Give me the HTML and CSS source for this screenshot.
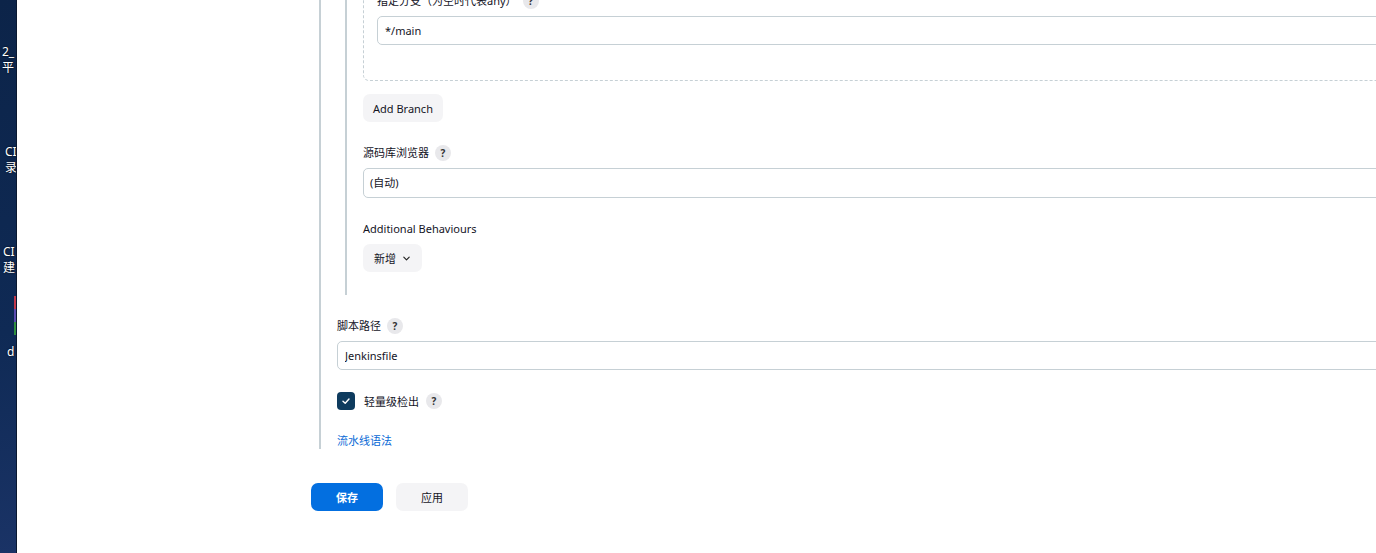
FILE: index.html
```html
<!DOCTYPE html>
<html lang="zh-CN">
<head>
  <meta charset="UTF-8" />
  <meta name="viewport" content="width=device-width, initial-scale=1.0" />
  <title>Pipeline 配置</title>
  <link rel="stylesheet" href="styles.css">
</head>
<body>
  <div class="desktop">
    <div class="desk-label l1">2_<br>平</div>
    <div class="desk-label l2">CI<br>录</div>
    <div class="desk-label l3">CI<br>建</div>
    <div class="desk-icon">
      <span class="bar red"></span>
      <span class="bar purple"></span>
      <span class="bar green"></span>
    </div>
    <div class="desk-label l4">d</div>
  </div>

  <div class="page">
    <div class="form">
      <div class="section outer">
        <div class="section inner">
          <div class="branch-box">
            <div class="label">指定分支（为空时代表any） <span class="help">?</span></div>
            <input class="field" type="text" value="*/main" />
          </div>

          <button class="btn small add-branch">Add Branch</button>

          <div class="label gap">源码库浏览器 <span class="help">?</span></div>
          <div class="field select">(自动)</div>

          <div class="label gap">Additional Behaviours</div>
          <button class="btn small add-new">新增
            <svg width="9" height="9" viewBox="0 0 10 10"><path d="M2 3.5 L5 6.5 L8 3.5" fill="none" stroke="#222" stroke-width="1.3" stroke-linecap="round" stroke-linejoin="round"/></svg>
          </button>
        </div>

        <div class="label gap">脚本路径 <span class="help">?</span></div>
        <input class="field" type="text" value="Jenkinsfile" />

        <div class="check-row">
          <span class="checkbox">
            <svg width="10" height="10" viewBox="0 0 10 10"><path d="M2 5.2 L4.2 7.3 L8 3" fill="none" stroke="#fff" stroke-width="1.4" stroke-linecap="round" stroke-linejoin="round"/></svg>
          </span>
          <span class="check-label">轻量级检出</span>
          <span class="help">?</span>
        </div>

        <a class="link" href="#">流水线语法</a>
      </div>

      <div class="actions">
        <button class="btn primary">保存</button>
        <button class="btn secondary">应用</button>
      </div>
    </div>
  </div>
</body>
</html>
```

FILE: styles.css
```css
* {
  box-sizing: border-box;
}

html, body {
  height: 100%;
}

body {
  margin: 0;
  display: flex;
  overflow: hidden;
  background: #ffffff;
  color: #14141f;
  font-family: "Noto Sans", "Noto Sans CJK SC", sans-serif;
  font-size: 11px;
}

/* desktop strip on the left */
.desktop {
  position: relative;
  width: 17px;
  flex-shrink: 0;
  background: linear-gradient(170deg, #0c2449 0%, #0f2a55 60%, #1a3366 100%);
  border-right: 1px solid #0a1830;
  overflow: hidden;
}
.desk-label {
  position: absolute;
  color: #ffffff;
  font-size: 12px;
  line-height: 16px;
  text-shadow: 0 0 2px #000;
  white-space: nowrap;
}
.l1 { top: 44px; left: 2px; }
.l2 { top: 144px; left: 5px; }
.l3 { top: 244px; left: 3px; }
.l4 { top: 344px; left: 7px; }
.desk-icon {
  position: absolute;
  top: 296px;
  left: 14px;
  display: flex;
  flex-direction: column;
}
.bar {
  width: 4px;
  height: 13px;
}
.red { background: #c0384c; }
.purple { background: #5a4bb0; }
.green { background: #2f8f3f; }

/* form area */
.page {
  flex: 1;
  padding-left: 294px;
}
.form {
  width: 1120px;
}
.section {
  border-left: 2px solid #c6d0d5;
  padding-left: 16px;
}
.outer {
  margin-left: 8px;
}
.inner {
  margin-left: 8px;
  padding-bottom: 23px;
}

.branch-box {
  margin-top: -7px;
  border-left: 1px dashed #c6d0d5;
  border-bottom: 1px dashed #c6d0d5;
  border-bottom-left-radius: 6px;
  padding: 0 0 35px 13px;
}

.label {
  display: flex;
  align-items: center;
  gap: 6px;
  height: 16px;
  line-height: 16px;
  margin-bottom: 7px;
}
.label.gap {
  margin-top: 23px;
}

.help {
  display: inline-flex;
  align-items: center;
  justify-content: center;
  width: 16px;
  height: 16px;
  border-radius: 50%;
  background: #e8e8eb;
  color: #333;
  font-size: 10px;
  font-weight: 700;
  line-height: 1;
}

.field {
  display: block;
  width: 100%;
  height: 29px;
  padding: 0 7px;
  border: 1px solid #c6d0d5;
  border-radius: 5px;
  background: #fff;
  color: #14141f;
  font-family: inherit;
  font-size: 11px;
  outline: none;
}
.select {
  height: 30px;
  line-height: 28px;
  padding-left: 6px;
}

.btn {
  border: none;
  border-radius: 7px;
  font-family: inherit;
  font-size: 11px;
  cursor: pointer;
}
.small {
  display: inline-flex;
  align-items: center;
  gap: 6px;
  height: 28px;
  padding: 0 10px;
  background: #f4f4f6;
  color: #14141f;
}
.add-branch {
  margin-top: 13px;
}
.add-new {
  padding: 0 11px;
}

.check-row {
  display: flex;
  align-items: center;
  height: 18px;
  margin-top: 22px;
}
.checkbox {
  display: inline-flex;
  align-items: center;
  justify-content: center;
  width: 18px;
  height: 18px;
  border-radius: 4px;
  background: #0e3b5e;
}
.check-label {
  margin-left: 9px;
  margin-right: 7px;
}

.link {
  display: block;
  margin-top: 23px;
  height: 16px;
  line-height: 16px;
  color: #0a6ad6;
  text-decoration: none;
}

.actions {
  display: flex;
  gap: 13px;
  margin-top: 34px;
}
.primary, .secondary {
  width: 72px;
  height: 28px;
}
.primary {
  background: #036fe0;
  color: #ffffff;
  font-weight: 700;
}
.secondary {
  background: #f4f4f6;
  color: #14141f;
}
```
